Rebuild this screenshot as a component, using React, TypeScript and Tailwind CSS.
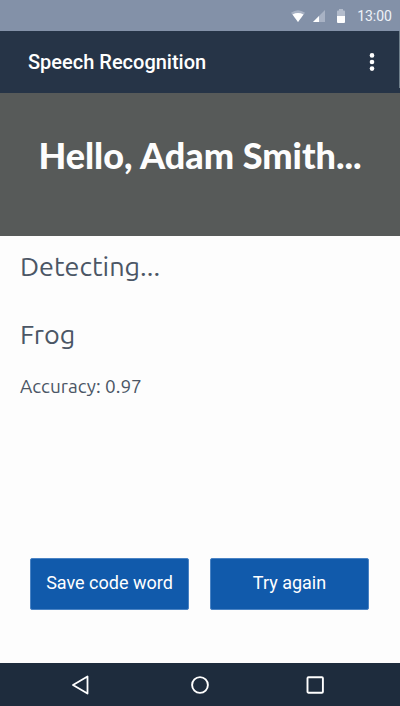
function StatusBar() {
  return (
    <div className="flex h-[31px] items-center justify-end bg-[#8391a8] pr-2 text-[#eef2f8]">
      <svg className="mr-2 h-3 w-[14px]" viewBox="0 0 14 12" aria-hidden="true">
        <path d="M0 2.8Q7-2.2 14 2.8L7 12Z" fill="currentColor" opacity=".35" />
        <path d="M1.5 4.4Q7 1.8 12.5 4.4L7 12Z" fill="#fff" />
      </svg>
      <svg className="mr-3 h-3 w-3" viewBox="0 0 12 12" aria-hidden="true">
        <path d="M12 0V12H0Z" fill="currentColor" opacity=".35" />
        <path d="M6 6V12H0Z" fill="#fff" />
      </svg>
      <svg className="mr-3 h-[14px] w-2" viewBox="0 0 8 14" aria-hidden="true">
        <path d="M2 0H6V1.5H7Q8 1.5 8 2.5V7H0V2.5Q0 1.5 1 1.5H2Z" fill="currentColor" opacity=".45" />
        <path d="M0 7H8V13Q8 14 7 14H1Q0 14 0 13Z" fill="#fff" />
      </svg>
      <time className="text-sm">13:00</time>
    </div>
  );
}

function AppBar() {
  return (
    <header className="relative flex h-[62px] items-center justify-between bg-[#263447] pl-7 pr-5 text-white">
      <h1 className="text-xl font-medium">Speech Recognition</h1>
      <button type="button" aria-label="More options" className="flex h-10 w-4 items-center justify-center">
        <svg className="h-5 w-2" viewBox="0 0 8 20" fill="currentColor" aria-hidden="true">
          <circle cx="4" cy="3.4" r="2.3" />
          <circle cx="4" cy="10" r="2.3" />
          <circle cx="4" cy="16.6" r="2.3" />
        </svg>
      </button>
      <span className="absolute top-0 right-0 h-[57px] w-px bg-[#6f7f8b]" />
    </header>
  );
}

const actionClass =
  "h-[52px] flex-1 rounded-xs border border-[#4a83c4] bg-[#115aab] pb-0.5 text-lg whitespace-nowrap text-white";

function NavBar() {
  return (
    <nav className="flex h-[43px] items-center justify-between bg-[#1e2c3d] pr-[74px] pl-[72px] text-white">
      <button type="button" aria-label="Back">
        <svg className="h-5 w-5" viewBox="0 0 20 20" fill="none" stroke="currentColor" strokeWidth="1.8" strokeLinejoin="round" aria-hidden="true">
          <path d="M15.5 1.5V18.5L1 10Z" />
        </svg>
      </button>
      <button type="button" aria-label="Home">
        <svg className="h-5 w-5" viewBox="0 0 20 20" fill="none" stroke="currentColor" strokeWidth="1.9" aria-hidden="true">
          <circle cx="11" cy="10" r="7.9" />
        </svg>
      </button>
      <button type="button" aria-label="Recent apps">
        <svg className="h-5 w-5" viewBox="0 0 20 20" fill="none" stroke="currentColor" strokeWidth="1.9" aria-hidden="true">
          <rect x="1.5" y="2.3" width="15.4" height="15.4" rx="1" />
        </svg>
      </button>
    </nav>
  );
}

export default function App() {
  return (
    <div className="flex min-h-screen flex-col bg-[#fdfdfd] font-['Roboto',sans-serif]">
      <StatusBar />
      <AppBar />
      <section className="flex h-[143px] justify-center bg-[#575a59] pt-8">
        <h2 className="font-['Chewy','Lato',sans-serif] text-[36px] leading-[60px] font-black whitespace-nowrap text-[#fdfdfd]">
          Hello, Adam Smith...
        </h2>
      </section>
      <main className="flex flex-1 flex-col">
        <div className="px-5 pt-2.5 font-['Ubuntu','Noto_Sans',sans-serif] text-[#4b5665]">
          <p className="text-[27px] leading-[40px]">Detecting...</p>
          <p className="mt-7 text-[27px] leading-[40px]">Frog</p>
          <p className="mt-5 text-[19px] leading-6">Accuracy: 0.97</p>
        </div>
        <div className="mt-auto flex gap-[21px] pr-[31px] pb-[53px] pl-[30px]">
          <button type="button" className={actionClass}>Save code word</button>
          <button type="button" className={actionClass}>Try again</button>
        </div>
      </main>
      <NavBar />
    </div>
  );
}
